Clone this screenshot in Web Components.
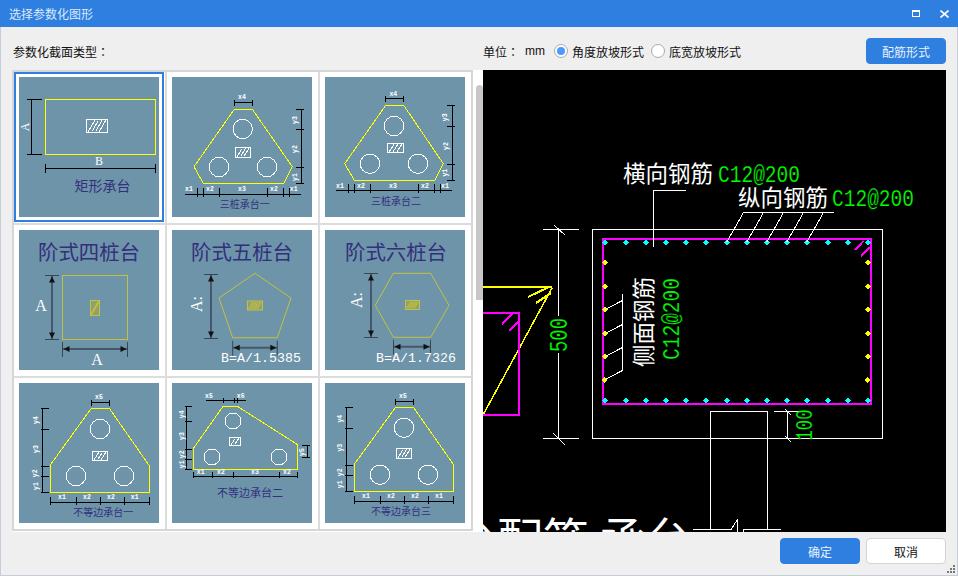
<!DOCTYPE html>
<html>
<head>
<meta charset="utf-8">
<title>选择参数化图形</title>
<style>
  html, body { margin: 0; padding: 0; background: #efefef; }
</style>
</head>
<body>
<param-dialog heading="选择参数化图形">
  <section-grid>
    <section-thumb shape="rect" selected></section-thumb>
    <section-thumb shape="tri1"></section-thumb>
    <section-thumb shape="tri2"></section-thumb>
    <section-thumb shape="step4"></section-thumb>
    <section-thumb shape="step5"></section-thumb>
    <section-thumb shape="step6"></section-thumb>
    <section-thumb shape="uneq1"></section-thumb>
    <section-thumb shape="uneq2"></section-thumb>
    <section-thumb shape="uneq3"></section-thumb>
  </section-grid>
  <cad-preview></cad-preview>
</param-dialog>

<script>
const UI_FONT = '"Noto Sans CJK SC", "Liberation Sans", sans-serif';
const YELLOW = '#ffff00';

// small svg helpers for the thumbnails
const ln = (x1, y1, x2, y2, c = '#000', w = 1) =>
  `<line x1="${x1}" y1="${y1}" x2="${x2}" y2="${y2}" stroke="${c}" stroke-width="${w}"/>`;
const poly = (pts, c = YELLOW) =>
  `<polygon points="${pts}" fill="none" stroke="${c}" stroke-width="1"/>`;
const circles = (list, r = 9.7) =>
  list.map(([x, y]) => `<circle cx="${x}" cy="${y}" r="${r}" fill="none" stroke="#fff"/>`).join('');
const tiny = (x, y, t, rot) =>
  `<text class="tiny" x="${x}" y="${y}" ${rot ? `transform="rotate(-90 ${x} ${y})"` : ''}>${t}</text>`;
const cap = (x, y, t, size = 10) =>
  `<text class="cap" x="${x}" y="${y}" font-size="${size}">${t}</text>`;

function hatch(x, y, w, h, c = '#fff', fill = 'none', slash = '#fff', pitch = 5) {
  let out = `<rect x="${x}" y="${y}" width="${w}" height="${h}" fill="${fill}" stroke="${c}"/>`;
  const n = Math.max(2, Math.round(w / pitch));
  for (let i = 0; i < n; i++) {
    const sx = x + (w - h * 0.5) * (i + 0.5) / n;
    out += ln(sx, y + h - 1, sx + h * 0.5, y + 1, slash);
  }
  return out;
}
const oliveHatch = (x, y, w, h) => hatch(x, y, w, h, OLIVE, '#8f9f72', '#c2c23e', 2.5);

function hdim(y, xs, a = 6, b = 2) {
  let out = ln(xs[0], y, xs[xs.length - 1], y);
  xs.forEach(x => { out += ln(x, y - a, x, y + b); });
  return out;
}

function vdim(x, ys, a = 6, b = 2) {
  let out = ln(x, ys[0], x, ys[ys.length - 1]);
  ys.forEach(y => { out += ln(x - a, y, x + b, y); });
  return out;
}

// the blurry scanned looking dims of the second row
function arrowV(x, y1, y2) {
  return ln(x, y1, x, y2, '#47566a', 2) + ln(x - 7, y1, x + 7, y1, '#3b4652') + ln(x - 7, y2, x + 7, y2, '#3b4652') +
    `<path d="M${x} ${y1 + 1}l-3 6h6zM${x} ${y2 - 1}l-3 -6h6z" fill="#111"/>`;
}
function arrowH(y, x1, x2) {
  return ln(x1, y, x2, y, '#47566a', 2) + ln(x1, y - 7, x1, y + 8, '#3b4652') + ln(x2, y - 7, x2, y + 8, '#3b4652') +
    `<path d="M${x1 + 1} ${y}l6 -3v6zM${x2 - 1} ${y}l-6 -3v6z" fill="#111"/>`;
}
const OLIVE = '#c2c23e';
const title = (x, t) => `<text class="head" x="${x}" y="29.5">${t}</text>`;
const mono = (x, t) => `<text class="mono" x="${x}" y="132">${t}</text>`;
const bigA = (x, y, rot) =>
  `<text class="bigA" x="${x}" y="${y}" ${rot ? `transform="rotate(-90 ${x} ${y})"` : ''}>${rot ? 'A:' : 'A'}</text>`;

const SHAPES = {
  rect: `<rect x="26.5" y="22.5" width="110" height="55" fill="none" stroke="${YELLOW}"/>` +
    hatch(67.5, 42.5, 21, 13) +
    ln(12.5, 22.5, 12.5, 77.5) + ln(8, 22.5, 23, 22.5) + ln(8, 77.5, 23, 77.5) +
    `<text class="mid" x="6" y="50" transform="rotate(-90 6 50)">A</text>` +
    hdim(91.5, [26.5, 136.5], 5, 4) +
    `<text class="mid" x="80" y="84">B</text>` +
    cap(83.5, 114, '矩形承台', 14),

  tri1: poly('62.3,32.3 80.3,32.3 120.3,89.7 112,106.3 31.3,106.3 22,89.7') +
    circles([[70.7, 52], [47, 90], [95, 90]]) +
    hatch(63.5, 70.5, 15, 10) +
    hdim(25.5, [62.5, 80.5], 3, 3) + tiny(70, 20.5, 'x4') +
    vdim(129.5, [32.5, 52.5, 90.5, 106.5]) +
    tiny(123, 43, 'y3', 1) + tiny(123, 72, 'y2', 1) + tiny(123, 100, 'y1', 1) +
    ln(13, 117.5, 129, 117.5) +
    [25.5, 31.5, 47.5, 95.5, 111.5, 117.5].map(x => ln(x, 111, x, 120)).join('') +
    tiny(17, 112, 'x1') + tiny(38, 112, 'x2') + tiny(70, 112, 'x3') + tiny(102, 112, 'x2') + tiny(121.7, 112, 'x1') +
    cap(72.7, 131, '三桩承台一'),

  tri2: poly('60.7,28.3 78.7,28.3 118.3,86.7 110,103.3 29.3,103.3 19.7,86.7') +
    circles([[69, 49], [45, 86.7], [93, 86.7]]) +
    hatch(62.5, 66.5, 16, 9) +
    hdim(21.5, [60.5, 78.5], 3, 3) + tiny(68.3, 17.3, 'x4') +
    vdim(127.5, [28.5, 49.5, 87.5, 103.5]) +
    tiny(121, 40.3, 'y3', 1) + tiny(121, 69, 'y2', 1) + tiny(121, 95.7, 'y1', 1) +
    ln(11, 113.5, 127, 113.5) +
    [23.5, 29.5, 45.5, 93.5, 109.5, 115.5].map(x => ln(x, 107, x, 116)).join('') +
    tiny(15, 109.7, 'x1') + tiny(36, 109.7, 'x2') + tiny(68, 109.7, 'x3') + tiny(100, 109.7, 'x2') + tiny(120, 109.7, 'x1') +
    cap(71, 127.5, '三桩承台二'),

  step4: title(70, '阶式四桩台') +
    `<rect x="43.5" y="45.5" width="65" height="64" fill="none" stroke="${OLIVE}"/>` +
    oliveHatch(71.5, 70.5, 9, 15) +
    arrowV(33, 45.5, 109.5) + arrowH(119, 43.5, 108.5) +
    bigA(22, 81) + bigA(78, 135),

  step5: title(70, '阶式五桩台') +
    poly('83,43.3 119,68 105.3,107.7 60.7,107.7 47,68', OLIVE) +
    oliveHatch(75.5, 71, 15, 9) +
    arrowV(39, 44.5, 108.5) + arrowH(117.7, 60.7, 105.3) +
    bigA(30, 74, 1) + mono(89, 'B=A/1.5385'),

  step6: title(71, '阶式六桩台') +
    poly('50.3,75.3 68.3,43.3 105.7,43.3 124,75.3 105.7,107.3 68.3,107.3', OLIVE) +
    oliveHatch(80.5, 70.5, 14, 9) +
    arrowV(46, 43.5, 107.5) + arrowH(116.7, 68.5, 105.5) +
    bigA(37, 70, 1) + mono(91, 'B=A/1.7326'),

  uneq1: poly('72.3,25.3 90.3,25.3 130.3,82.7 130.3,109.3 31.3,109.3 31.3,82') +
    circles([[81, 46], [57, 93], [105, 93]]) +
    hatch(73.5, 68.5, 15, 9) +
    hdim(19.5, [72.5, 90.5], 3, 3) + tiny(80, 14.7, 'x5') +
    vdim(23.5, [25.5, 46.5, 83.5, 93.5, 109.5], 2, 6) +
    tiny(17, 37, 'y4', 1) + tiny(17, 66, 'y3', 1) + tiny(17, 90.3, 'y2', 1) + tiny(17, 103, 'y1', 1) +
    hdim(119.5, [31.5, 57.5, 81.5, 105.5, 130.5], 6, 2) +
    tiny(43, 114.7, 'x1') + tiny(68, 114.7, 'x2') + tiny(92, 114.7, 'x2') + tiny(115.7, 114.7, 'x1') +
    cap(84.3, 133, '不等边承台一'),

  uneq2: poly('51,23.3 65.3,23.3 125.7,61.7 125.7,86.3 21.7,86.3 21.7,65') +
    circles([[61, 38], [40, 74], [107, 74]], 8) +
    hatch(57.5, 54.5, 11, 8) +
    ln(34, 17.5, 74, 17.5) + [51.5, 62.5, 65.5].map(x => ln(x, 15, x, 20)).join('') +
    tiny(37, 13.3, 'x5') + tiny(68.7, 13.3, 'x6') +
    vdim(14.5, [23.5, 38.5, 66.5, 76.5, 86.5], 2, 5) +
    tiny(10.3, 31.3, 'y4', 1) + tiny(10.3, 53, 'y3', 1) + tiny(10.3, 71.3, 'y2', 1) + tiny(10.3, 81.3, 'y1', 1) +
    vdim(135.5, [62.5, 74.5], 6, 2) + tiny(130.7, 69, 'y5', 1) +
    hdim(93.5, [21.5, 40.5, 61.5, 107.5, 125.5], 5, 1) +
    tiny(28.7, 89.3, 'x1') + tiny(49, 89.3, 'x2') + tiny(83, 89.3, 'x3') + tiny(115, 89.3, 'x2') +
    cap(78, 114, '不等边承台二', 11),

  uneq3: poly('70.3,24.7 88.7,24.7 128.3,81.3 128.3,108.3 29.3,108.3 29.3,81.3') +
    circles([[79, 44.7], [55, 91.7], [103, 91.7]]) +
    hatch(71.5, 65.5, 15, 10) +
    hdim(18.5, [70.5, 88.5], 3, 3) + tiny(78, 13.7, 'x5') +
    vdim(21.5, [24.5, 45.5, 82.5, 92.5, 108.5], 2, 6) +
    tiny(15.3, 35.7, 'y4', 1) + tiny(15.3, 64.7, 'y3', 1) + tiny(15.3, 89.3, 'y2', 1) + tiny(15.3, 101.3, 'y1', 1) +
    hdim(118.5, [29.5, 55.5, 79.5, 103.5, 128.5], 6, 2) +
    tiny(41, 113.7, 'x1') + tiny(66, 113.7, 'x2') + tiny(90, 113.7, 'x2') + tiny(114, 113.7, 'x1') +
    cap(76, 132, '不等边承台三'),
};

class SectionThumb extends HTMLElement {
  connectedCallback() {
    const blurry = (this.getAttribute('shape') || '').startsWith('step');
    this.attachShadow({ mode: 'open' });
    this.shadowRoot.innerHTML = `
      <style>
        :host { display: block; background: #fff; padding: 5px; }
        .pic { display: block; width: 140px; height: 140px; background: #6e94aa; }
        :host([selected]) .pic { outline: 2px solid #2e7fe0; outline-offset: 3px; }
        text { text-anchor: middle; }
        .tiny { font: bold 6.5px "Liberation Mono", monospace; fill: #fff; dominant-baseline: central; }
        .mid { font: 12px "Liberation Serif", serif; fill: #fff; dominant-baseline: central; }
        .cap { font-family: ${UI_FONT}; fill: #33307a; }
        .head { font: 20.4px ${UI_FONT}; fill: #33307a; }
        .mono { font: 13.3px "Liberation Mono", monospace; fill: #fff; }
        .bigA { font: 16px "Liberation Serif", serif; fill: #fff; }
      </style>
      <svg class="pic" viewBox="0 0 140 140" shape-rendering="${blurry ? 'auto' : 'crispEdges'}">
        ${SHAPES[this.getAttribute('shape')] || ''}
      </svg>`;
  }
}

class SectionGrid extends HTMLElement {
  constructor() {
    super();
    this.attachShadow({ mode: 'open' });
    this.shadowRoot.innerHTML = `
      <style>
        :host { display: flex; flex: none; width: 471px; height: 462px; background: #fff; }
        .grid {
          display: grid;
          grid-template-columns: repeat(3, 151px);
          grid-template-rows: repeat(3, 151px);
          gap: 2px;
          align-self: flex-start;
          background: #dcdcdc;
          border: 2px solid #d6d6d6;
        }
        .track { flex: 1; padding: 15px 0 0 3px; }
        .bar { width: 7px; height: 215px; background: #c8c8c8; border-radius: 4px 4px 0 0; }
      </style>
      <div class="grid"><slot></slot></div>
      <div class="track"><div class="bar"></div></div>`;
  }
}

class RadioOption extends HTMLElement {
  constructor() {
    super();
    this.attachShadow({ mode: 'open' });
    this.shadowRoot.innerHTML = `
      <style>
        :host { display: inline-flex; align-items: center; gap: 4px; }
        .dot {
          width: 12px; height: 12px; box-sizing: content-box;
          border: 1px solid #a9a9a9; border-radius: 50%; background: #fff;
          display: flex; align-items: center; justify-content: center;
        }
        :host([checked]) .dot::after {
          content: ""; width: 8px; height: 8px; border-radius: 50%; background: #4a9bfb;
        }
      </style>
      <span class="dot"></span><slot></slot>`;
  }
}

class DialogButton extends HTMLElement {
  constructor() {
    super();
    this.attachShadow({ mode: 'open' });
    this.shadowRoot.innerHTML = `
      <style>
        :host {
          display: flex; align-items: center; justify-content: center;
          box-sizing: border-box; width: 80px; height: 26px; border-radius: 4px;
          background: #fff; border: 1px solid #d4d4d4; color: #111; font-size: 12px;
        }
        :host([primary]) { background: #2e7fe0; border-color: #2e7fe0; color: #e8f1fd; }
      </style>
      <slot></slot>`;
  }
}

class CadPreview extends HTMLElement {
  connectedCallback() {
    const seg = (a, b, c, d, col = '#fff', w = 1) => ln(a, b, c, d, col, w);
    const dot = (x, y, col) => `<path d="M${x - 3} ${y}L${x} ${y - 3}L${x + 3} ${y}L${x} ${y + 3}Z" fill="${col}"/>`;
    const side = [262.5, 286.5, 309.5, 333.5, 356.5, 380];
    const along = [604.5, 625.5, 645.5, 665.5, 685.5, 705.5, 726.5, 746.5, 766.5, 786.5, 806.5, 827.5, 847.5, 867.5];
    let dots = '';
    along.forEach(x => { dots += dot(x, 242.5, '#00ffff') + dot(x, 400.5, '#00ffff'); });
    side.forEach(y => { dots += dot(604.5, y, YELLOW) + dot(867.5, y, YELLOW); });
    const slashes = [743.5, 763.5, 783.5, 803.5, 823.5].map(x => seg(x, 212.5, x - 17, 242.5)).join('');
    const sideLeaders = [[309.5, 300.5], [333.5, 324.5], [356.5, 347.5], [379.5, 370.5]]
      .map(([a, b]) => seg(605, a, 622.5, b)).join('');
    // green dims are a thin tall mono face in the reference, so squeeze and thin this one
    const green = (x, y, size, len, t, rot) =>
      `<text class="gr" font-size="${size}" x="${x}" y="${y}" textLength="${len}" lengthAdjust="spacingAndGlyphs"
        dominant-baseline="central" ${rot ? `transform="rotate(-90 ${x} ${y})"` : ''}>${t}</text>`;
    this.attachShadow({ mode: 'open' });
    this.shadowRoot.innerHTML = `
      <style>
        :host { display: block; flex: none; width: 463px; height: 462px; background: #000; overflow: hidden; }
        svg { display: block; }
        text { text-anchor: middle; }
        .cn { font: 22.5px ${UI_FONT}; fill: #fff; }
        .big { font: 46px ${UI_FONT}; fill: #fff; text-anchor: start; }
        .gr { font-family: "Liberation Mono", monospace; fill: #00ff00; stroke: #000; stroke-width: .25px; }
      </style>
      <svg width="463" height="462" viewBox="483 70 463 462" shape-rendering="crispEdges">
        <!-- neighbouring member, cut by the view -->
        ${seg(483, 286.5, 552, 286.5, YELLOW, 2)}
        ${seg(528, 297, 549, 287, YELLOW, 2)}
        ${seg(536, 303, 551, 293, YELLOW, 2)}
        ${seg(552, 288, 483, 415, YELLOW, 1.5)}
        <path d="M483 313H518.5V415H483" fill="none" stroke="#ff00ff" stroke-width="2"/>
        ${seg(502, 324, 513, 313.5, '#ff00ff', 2)}
        ${seg(509, 331, 518, 322, '#ff00ff', 2)}

        <!-- dim 500 -->
        ${seg(542.5, 229.5, 579, 229.5)}
        ${seg(542.5, 438.5, 579, 438.5)}
        ${seg(558.5, 229.5, 558.5, 316)}
        ${seg(558.5, 353, 558.5, 438.5)}
        ${seg(554, 225, 565, 235)}
        ${seg(553, 433, 565, 445)}
        ${green(560, 335, 25, 34, '500', 1)}

        <!-- pile cap -->
        <rect x="592.5" y="229.5" width="290" height="209" fill="none" stroke="#fff"/>
        <rect x="603" y="239" width="268" height="165" fill="none" stroke="#ff00ff" stroke-width="2"/>
        ${seg(855, 250, 863.5, 241, '#ff00ff', 2)}
        ${seg(861, 256, 870.5, 247, '#ff00ff', 2)}
        ${dots}

        <!-- leaders and labels -->
        <path d="M685.5 190.5H653.5V246.5" fill="none" stroke="#fff"/>
        ${seg(743, 212.5, 834, 212.5)}
        ${slashes}
        ${seg(622.5, 294, 622.5, 370.5)}
        ${sideLeaders}
        <text class="cn" x="668" y="182">横向钢筋</text>
        ${green(759, 175, 24, 82, 'C12@200')}
        <text class="cn" x="783" y="206">纵向钢筋</text>
        ${green(873, 199, 24, 82, 'C12@200')}
        <text class="cn" x="642" y="322" dominant-baseline="central" transform="rotate(-90 642 322)">侧面钢筋</text>
        ${green(672.5, 319, 24, 82, 'C12@200', 1)}

        <!-- column and dim 100 -->
        <path d="M710.5 529.5V411.5H767.5V529.5" fill="none" stroke="#fff"/>
        <path d="M693 529.5H731L737.5 519.5V532M743 532V529.5H781" fill="none" stroke="#fff"/>
        ${seg(774, 411.5, 800, 411.5)}
        ${seg(787.5, 411.5, 787.5, 438.5)}
        ${seg(785, 409, 791, 415)}
        ${seg(785, 436, 791, 442)}
        ${green(806, 425, 23, 31, '100', 1)}

        <text class="big" x="451" y="556" xml:space="preserve">台配筋 承台</text>
      </svg>`;
  }
}

class ParamDialog extends HTMLElement {
  connectedCallback() {
    this.attachShadow({ mode: 'open' });
    const colon = '<span class="colon">：</span>';
    this.shadowRoot.innerHTML = `
      <style>
        :host {
          display: flex; flex-direction: column; width: 958px; height: 576px;
          overflow: hidden; position: relative;
          font: 12px ${UI_FONT}; color: #111; background: #efefef;
        }
        .bar {
          flex: none; display: flex; align-items: center; height: 27px;
          padding: 0 9px; background: #2e7fe0; color: #dce9fb;
        }
        .bar .grow { flex: 1; }
        .bar svg { display: block; margin-left: 19px; }
        .bar .first { margin-right: 1px; }
        .body {
          flex: 1; display: flex; flex-direction: column; min-height: 0;
          border: solid #c4cedb; border-width: 0 1px 1px;
        }
        .tools {
          flex: none; display: flex; align-items: center; box-sizing: border-box;
          height: 43px; padding: 5px 11px 0;
        }
        .tools .kind { width: 471px; padding-left: 1px; box-sizing: border-box; }
        .tools .unit { width: 42px; }
        .tools .mm { width: 29px; font-family: "Liberation Sans", sans-serif; }
        .colon { font-family: "Noto Sans CJK TC", sans-serif; }
        .tools radio-option + radio-option { margin-left: 7px; }
        .tools dialog-button { margin-left: auto; }
        .main { flex: 1; display: flex; min-height: 0; padding: 0 11px; }
        .foot {
          flex: none; height: 43px; box-sizing: border-box; padding: 6px 11px 0;
          display: flex; justify-content: flex-end; gap: 6px;
        }
        .grip { position: absolute; right: 3px; bottom: 3px; display: block; }
      </style>
      <div class="bar">
        <span>${this.getAttribute('heading')}</span>
        <span class="grow"></span>
        <svg class="first" width="8" height="7" viewBox="0 0 8 7" shape-rendering="crispEdges">
          <path d="M0 0H8V7H0Z M1 2V6H7V2Z" fill="#fff" fill-rule="evenodd"/>
        </svg>
        <svg width="9" height="8" viewBox="0 0 9 8">
          <path d="M.5.5L8.5 7.5M8.5.5L.5 7.5" stroke="#fff" stroke-width="1.6" fill="none"/>
        </svg>
      </div>
      <div class="body">
        <div class="tools">
          <span class="kind">参数化截面类型${colon}</span>
          <span class="unit">单位${colon}</span>
          <span class="mm">mm</span>
          <radio-option checked>角度放坡形式</radio-option>
          <radio-option>底宽放坡形式</radio-option>
          <dialog-button primary>配筋形式</dialog-button>
        </div>
        <div class="main"><slot></slot></div>
        <div class="foot">
          <dialog-button primary>确定</dialog-button>
          <dialog-button>取消</dialog-button>
        </div>
      </div>
      <svg class="grip" width="8" height="8" viewBox="0 0 8 8" fill="#777" shape-rendering="crispEdges">
        <rect x="6" y="0" width="2" height="2"/>
        <rect x="3" y="3" width="2" height="2"/><rect x="6" y="3" width="2" height="2"/>
        <rect x="0" y="6" width="2" height="2"/><rect x="3" y="6" width="2" height="2"/><rect x="6" y="6" width="2" height="2"/>
      </svg>`;
  }
}

customElements.define('section-thumb', SectionThumb);
customElements.define('section-grid', SectionGrid);
customElements.define('radio-option', RadioOption);
customElements.define('dialog-button', DialogButton);
customElements.define('cad-preview', CadPreview);
customElements.define('param-dialog', ParamDialog);
</script>
</body>
</html>
